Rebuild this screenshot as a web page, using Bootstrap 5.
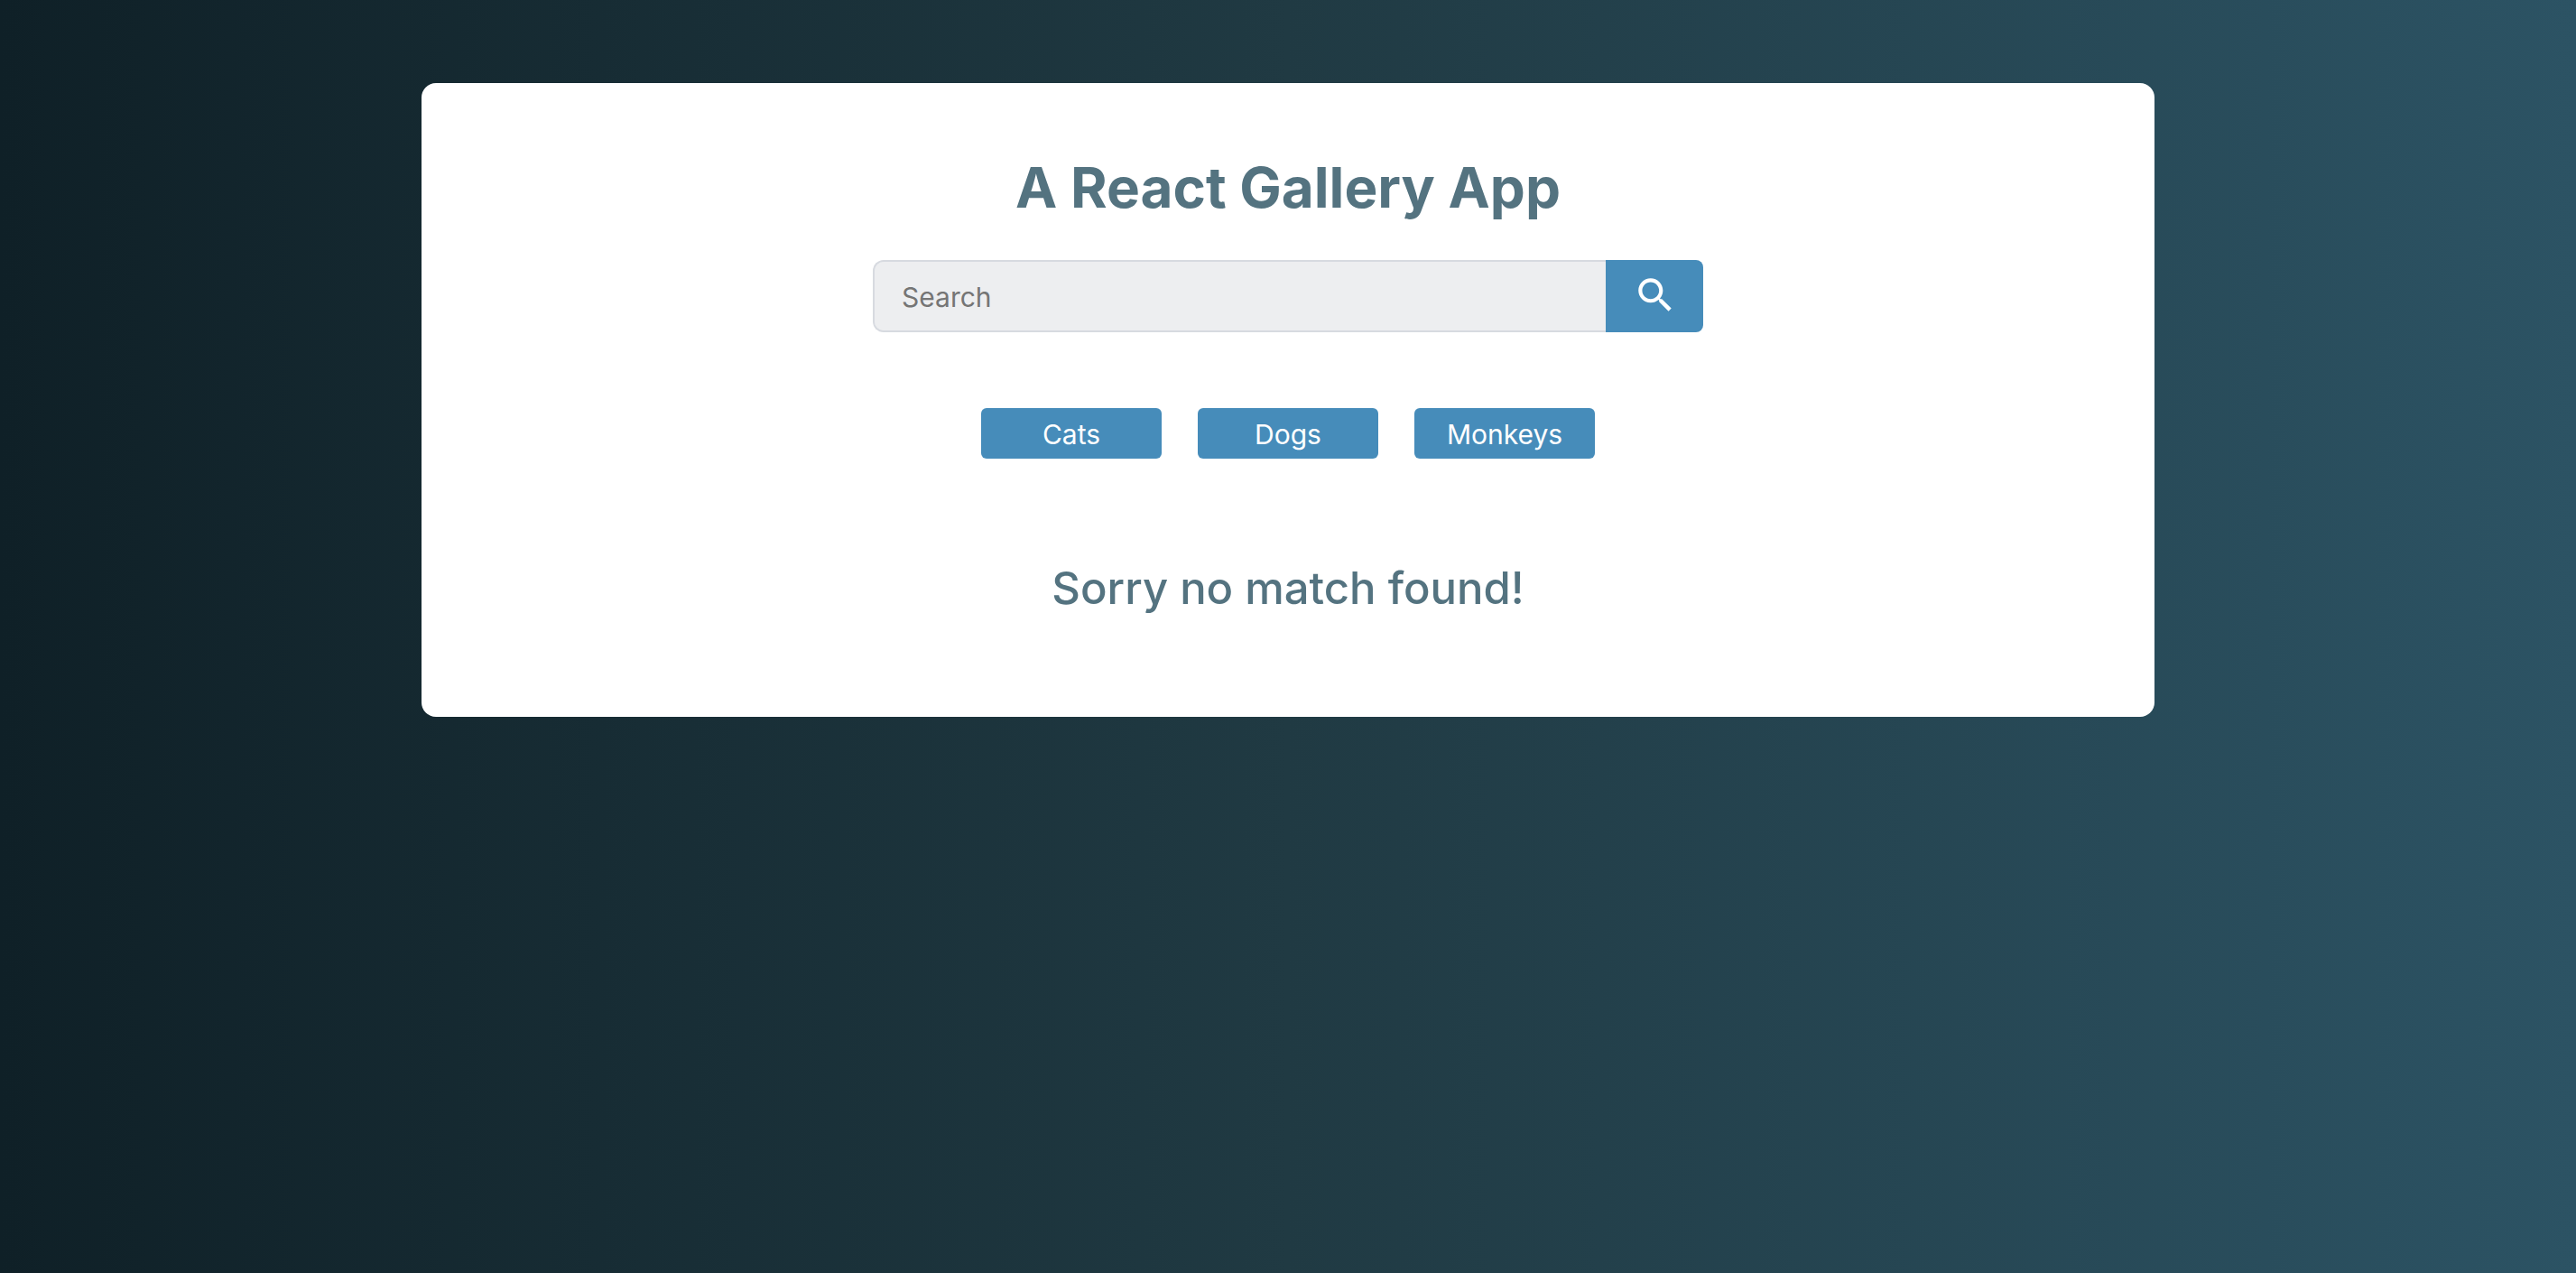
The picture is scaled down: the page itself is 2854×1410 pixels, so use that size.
<!DOCTYPE html>
<html lang="en">
<head>
<meta charset="utf-8">
<meta name="viewport" content="width=device-width, initial-scale=1">
<title>A React Gallery App</title>
<link rel="stylesheet" href="https://cdn.jsdelivr.net/npm/bootstrap@5.3.0/dist/css/bootstrap.min.css">
<style>
  body {
    font-family: Inter, "Liberation Sans", sans-serif;
    font-size: 30px;
    color: #547380;
    background: linear-gradient(to right, #0f2027, #203a43, #2c5364) fixed;
  }
  .gallery {
    max-width: 1920px;
    margin-top: 92px;
    padding: 76px 40px 110px;
    border-radius: 16px;
  }
  .gallery h1 { font-size: 62px; font-weight: 700; line-height: 80px; margin-bottom: 40px; }
  .gallery h2 { font-size: 49px; font-weight: 500; line-height: 64px; margin-top: 112px; }
  .search-form { max-width: 920px; height: 80px; }
  .search-form .form-control {
    font-size: 30px;
    padding: 2px 30px 0;
    color: #547380;
    background-color: #edeef0;
    border: 2px solid #d7dae0;
    border-right: 0;
    border-radius: 12px 0 0 12px;
  }
  .search-form .form-control::placeholder { color: #757575; }
  .search-form .btn { width: 108px; padding: 0 0 2px 2px; border: 0; border-radius: 0 8px 8px 0; }
  .btn-sky { --bs-btn-color: #fff; --bs-btn-bg: #468cba; --bs-btn-hover-color: #fff; --bs-btn-hover-bg: #3a7ba6; }
  .topics { gap: 40px; margin-top: 84px; }
  .topics .btn { width: 200px; height: 56px; padding: 0; border: 0; border-radius: 6px; font-size: 30px; line-height: 58px; }
</style>
</head>
<body>
<main class="gallery container bg-white text-center">
  <h1>A React Gallery App</h1>
  <form class="search-form d-flex mx-auto" role="search">
    <input type="search" class="form-control" placeholder="Search" aria-label="Search">
    <button type="submit" class="btn btn-sky flex-shrink-0 d-flex align-items-center justify-content-center" aria-label="Submit search">
      <svg width="50" height="50" viewBox="0 0 24 24" fill="#fff" aria-hidden="true"><path d="M15.5 14h-.79l-.28-.27C15.41 12.59 16 11.11 16 9.5 16 5.91 13.09 3 9.5 3S3 5.91 3 9.5 5.91 16 9.5 16c1.61 0 3.09-.59 4.23-1.57l.27.28v.79l5 4.99L20.49 19l-4.99-5zm-6 0C7.01 14 5 11.99 5 9.5S7.01 5 9.5 5 14 7.01 14 9.5 11.99 14 9.5 14z"/></svg>
    </button>
  </form>
  <nav class="topics d-flex justify-content-center" aria-label="Topics">
    <a class="btn btn-sky" href="#cats">Cats</a>
    <a class="btn btn-sky" href="#dogs">Dogs</a>
    <a class="btn btn-sky" href="#monkeys">Monkeys</a>
  </nav>
  <h2 class="mb-0">Sorry no match found!</h2>
</main>
<script src="https://cdn.jsdelivr.net/npm/bootstrap@5.3.0/dist/js/bootstrap.bundle.min.js"></script>
</body>
</html>
